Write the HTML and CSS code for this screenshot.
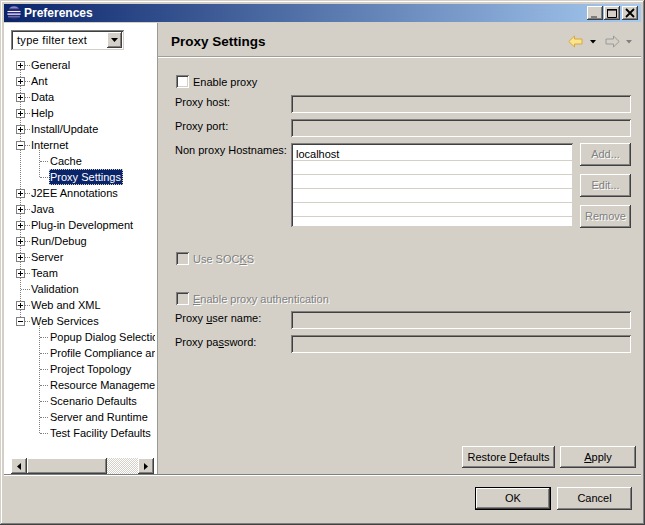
FILE: index.html
```html
<!DOCTYPE html>
<html lang="en">
<head>
<meta charset="utf-8">
<title>Preferences</title>
<link rel="stylesheet" href="styles.css">
</head>
<body>
<div class="window">
  <div class="titlebar">
    <svg class="logo" width="14" height="14" viewBox="0 0 14 14"><circle cx="7" cy="7" r="6.500" fill="#2a2a78"/><path d="M2 2.500a6.500 6.500 0 0 1 10 0z" fill="#8a88c8"/><path d="M.5 5h13v1H.5zM.4 7.500h13.200v1.200H.4z" fill="#f0f0fa"/><path d="M1 10.500h12v.7H1z" fill="#b0b0dc"/></svg>
    <span class="title-text">Preferences</span>
    <div class="caption-btns">
      <span class="cap"><svg width="16" height="14" viewBox="0 0 16 14"><rect x="4" y="10" width="6" height="2" fill="#808080"/></svg></span>
      <span class="cap"><svg width="16" height="14" viewBox="0 0 16 14"><path d="M3.500 3.500h9v8h-9z" fill="none" stroke="#000"/><path d="M3 3h10v1.600H3z" fill="#000"/></svg></span>
      <span class="cap cap-close"><svg width="16" height="14" viewBox="0 0 16 14"><path d="M4 3l8 8M12 3l-8 8" stroke="#000" stroke-width="1.800"/></svg></span>
    </div>
  </div>
  <div class="main">
    <aside class="side">
      <div class="combo">
        <span class="combo-text">type filter text</span>
        <span class="combo-btn"><svg width="7" height="4" viewBox="0 0 7 4"><path d="M0 0h7L3.500 4z" fill="#000"/></svg></span>
      </div>
      <div class="tree">
        <div class="row"><span class="tg plus"></span><span class="dash"></span><span class="lb">General</span></div>
        <div class="row"><span class="tg plus"></span><span class="dash"></span><span class="lb">Ant</span></div>
        <div class="row"><span class="tg plus"></span><span class="dash"></span><span class="lb">Data</span></div>
        <div class="row"><span class="tg plus"></span><span class="dash"></span><span class="lb">Help</span></div>
        <div class="row"><span class="tg plus"></span><span class="dash"></span><span class="lb">Install/Update</span></div>
        <div class="row"><span class="tg"></span><span class="dash"></span><span class="lb">Internet</span></div>
        <div class="kids">
          <div class="row kid"><span class="dash"></span><span class="lb">Cache</span></div>
          <div class="row kid"><span class="dash"></span><span class="lb sel">Proxy Settings</span></div>
        </div>
        <div class="row"><span class="tg plus"></span><span class="dash"></span><span class="lb">J2EE Annotations</span></div>
        <div class="row"><span class="tg plus"></span><span class="dash"></span><span class="lb">Java</span></div>
        <div class="row"><span class="tg plus"></span><span class="dash"></span><span class="lb">Plug-in Development</span></div>
        <div class="row"><span class="tg plus"></span><span class="dash"></span><span class="lb">Run/Debug</span></div>
        <div class="row"><span class="tg plus"></span><span class="dash"></span><span class="lb">Server</span></div>
        <div class="row"><span class="tg plus"></span><span class="dash"></span><span class="lb">Team</span></div>
        <div class="row leaf"><span class="dash"></span><span class="lb">Validation</span></div>
        <div class="row"><span class="tg plus"></span><span class="dash"></span><span class="lb">Web and XML</span></div>
        <div class="row"><span class="tg"></span><span class="dash"></span><span class="lb">Web Services</span></div>
        <div class="kids">
          <div class="row kid"><span class="dash"></span><span class="lb">Popup Dialog Selection</span></div>
          <div class="row kid"><span class="dash"></span><span class="lb">Profile Compliance and WS-I</span></div>
          <div class="row kid"><span class="dash"></span><span class="lb">Project Topology</span></div>
          <div class="row kid"><span class="dash"></span><span class="lb">Resource Management</span></div>
          <div class="row kid"><span class="dash"></span><span class="lb">Scenario Defaults</span></div>
          <div class="row kid"><span class="dash"></span><span class="lb">Server and Runtime</span></div>
          <div class="row kid"><span class="dash"></span><span class="lb">Test Facility Defaults</span></div>
        </div>
      </div>
      <div class="hscroll">
        <span class="sb-btn"><svg width="4" height="7" viewBox="0 0 4 7"><path d="M4 0v7L0 3.500z" fill="#000"/></svg></span>
        <span class="sb-thumb"></span>
        <span class="sb-track"></span>
        <span class="sb-btn"><svg width="4" height="7" viewBox="0 0 4 7"><path d="M0 0v7l4-3.500z" fill="#000"/></svg></span>
      </div>
    </aside>
    <section class="content">
      <header class="head">
        <h1 class="head-title">Proxy Settings</h1>
        <div class="nav">
          <svg class="nav-back" width="15" height="13" viewBox="0 0 15 13"><path d="M.8 6.500L6.500 1v3H14v5H6.500v3z" fill="#fbe58c" stroke="#d8a83c"/></svg>
          <svg class="nav-drop" width="6" height="4" viewBox="0 0 6 4"><path d="M0 0h6L3 3.500z" fill="#000"/></svg>
          <svg class="nav-fwd" width="15" height="13" viewBox="0 0 15 13"><path d="M14.200 6.500L8.500 1v3H1v5h7.500v3z" fill="#d4d0c8" stroke="#9a9a96"/></svg>
          <svg class="nav-drop2" width="6" height="4" viewBox="0 0 6 4"><path d="M0 0h6L3 3.500z" fill="#808080"/></svg>
        </div>
      </header>
      <div class="form">
        <label class="check first"><span class="box"></span><span>Enable proxy</span></label>
        <div class="field-row gap6"><span class="lab">Proxy host:</span><span class="field"></span></div>
        <div class="field-row gap6"><span class="lab">Proxy port:</span><span class="field"></span></div>
        <div class="field-row gap6">
          <span class="lab">Non proxy Hostnames:</span>
          <div class="list">
            <div class="list-row">localhost</div>
            <div class="list-row"></div>
            <div class="list-row"></div>
            <div class="list-row"></div>
            <div class="list-row"></div>
            <div class="list-row"></div>
          </div>
          <div class="list-btns">
            <span class="btn small off">Add...</span>
            <span class="btn small off">Edit...</span>
            <span class="btn small off">Remove</span>
          </div>
        </div>
        <label class="check socks off"><span class="box dim"></span><span>Use SOC<u>K</u>S</span></label>
        <label class="check auth off"><span class="box dim"></span><span><u>E</u>nable proxy authentication</span></label>
        <div class="field-row gap5"><span class="lab">Proxy <u>u</u>ser name:</span><span class="field"></span></div>
        <div class="field-row gap6"><span class="lab">Proxy pa<u>s</u>sword:</span><span class="field"></span></div>
      </div>
      <div class="page-btns">
        <span class="btn restore"><span>Restore <u>D</u>efaults</span></span>
        <span class="btn apply"><span><u>A</u>pply</span></span>
      </div>
    </section>
  </div>
  <footer class="footer">
    <span class="btn dlg default">OK</span>
    <span class="btn dlg cancel">Cancel</span>
  </footer>
</div>
</body>
</html>
```
FILE: styles.css
```css
* { box-sizing: border-box; }
html, body { margin: 0; padding: 0; }
body { width: 645px; height: 525px; overflow: hidden; background: #d4d0c8; font-family: "Liberation Sans", Arial, sans-serif; font-size: 11px; color: #000; }
.window { width: 645px; height: 525px; padding: 4px 4px 2px 4px; background: #d4d0c8; display: flex; flex-direction: column; box-shadow: inset -1px -1px 0 #404040, inset 1px 1px 0 #d4d0c8, inset -2px -2px 0 #808080, inset 2px 2px 0 #fff; }
.titlebar { height: 18px; flex: none; display: flex; align-items: center; padding: 0 3px; background: linear-gradient(90deg, #0a246a, #a6caf0); color: #fff; }
.logo { flex: none; margin-right: 3px; }
.title-text { font-weight: bold; font-size: 12px; }
.caption-btns { margin-left: auto; display: flex; gap: 1px; }
.cap { width: 16px; height: 14px; display: block; background: #d4d0c8; box-shadow: inset -1px -1px 0 #404040, inset 1px 1px 0 #fff, inset -2px -2px 0 #808080; }
.cap svg { display: block; }
.cap-close { margin-left: 1px; }

.main { height: 451px; flex: none; margin-top: 1px; display: flex; }
.side { width: 154px; flex: none; background: #fff; border-right: 1px solid #9c9a94; display: flex; flex-direction: column; padding: 7px 3px 0 7px; overflow: hidden; }
.combo { width: 113px; height: 20px; flex: none; display: flex; align-items: center; justify-content: space-between; padding: 0 2px 0 6px; box-shadow: inset 1px 1px 0 #808080, inset -1px -1px 0 #d4d0c8, inset 2px 2px 0 #404040; background: #fff; }
.combo-text { white-space: nowrap; letter-spacing: .3px; }
.combo-btn { width: 15px; height: 16px; display: flex; align-items: center; justify-content: center; background: #d4d0c8; box-shadow: inset -1px -1px 0 #404040, inset 1px 1px 0 #fff, inset -2px -2px 0 #808080; }

.tree { flex: none; height: 401px; margin: 7px -1px 0 -7px; position: relative; overflow: hidden; }
.tree::before { content: ""; position: absolute; left: 16px; top: 8px; height: 256px; border-left: 1px dotted #808080; }
.row { height: 16px; display: flex; align-items: center; white-space: nowrap; padding-left: 12px; position: relative; }
.tg { flex: none; width: 9px; height: 9px; border: 1px solid #808080; background: #fff; position: relative; z-index: 1; }
.tg::before { content: ""; position: absolute; left: 1px; top: 3px; width: 5px; height: 1px; background: #000; }
.plus::after { content: ""; position: absolute; left: 3px; top: 1px; width: 1px; height: 5px; background: #000; }
.dash { flex: none; width: 5px; border-top: 1px dotted #808080; }
.lb { padding: 0 1px; line-height: 16px; }
.leaf { padding-left: 17px; }
.leaf .dash { width: 9px; }
.kids { position: relative; }
.kids::before { content: ""; position: absolute; left: 35px; top: -8px; bottom: 8px; border-left: 1px dotted #808080; }
.kid { padding-left: 36px; }
.kid .dash { width: 8px; margin-right: 1px; }
.sel { background: #0a246a; color: #fff; outline: 1px dotted #d4d0c8; outline-offset: -1px; padding: 0 2px 0 1px; }

.hscroll { height: 16px; flex: none; width: 143px; display: flex; }
.sb-btn { width: 16px; flex: none; display: flex; align-items: center; justify-content: center; background: #d4d0c8; box-shadow: inset -1px -1px 0 #404040, inset 1px 1px 0 #fff, inset -2px -2px 0 #808080; }
.sb-thumb { width: 80px; flex: none; background: #d4d0c8; box-shadow: inset -1px -1px 0 #404040, inset 1px 1px 0 #fff, inset -2px -2px 0 #808080; }
.sb-track { flex: 1; background: repeating-conic-gradient(#fff 0 25%, #d4d0c8 0 50%) 0 0 / 2px 2px; }

.content { flex: 1; min-width: 0; display: flex; flex-direction: column; }
.head { height: 35px; flex: none; display: flex; align-items: center; padding-left: 13px; box-shadow: inset 0 -1px 0 #fff, inset 0 -2px 0 #a09e98; }
.head-title { margin: 0; font-size: 13.500px; font-weight: bold; padding-top: 2px; }
.nav { margin-left: auto; display: flex; align-items: center; padding-top: 2px; margin-right: 9px; }
.nav-back { margin-right: 7px; }
.nav-drop { margin-right: 9px; }
.nav-fwd { margin-right: 6px; }

.form { flex: none; padding: 15px 10px 0 17px; }
.check { display: flex; align-items: center; height: 16px; }
.check > span:last-child { position: relative; top: 1px; }
.box { width: 13px; height: 13px; margin: 0 4px 0 1px; flex: none; background: #fff; box-shadow: inset 1px 1px 0 #808080, inset -1px -1px 0 #fff, inset 2px 2px 0 #404040, inset -2px -2px 0 #d4d0c8; }
.box.dim { background: #d4d0c8; }
.off { color: #808080; text-shadow: 1px 1px 0 #fff; }
.socks { margin-top: 22px; }
.auth { margin-top: 24px; }
.field-row { display: flex; align-items: flex-start; }
.gap6 { margin-top: 6px; }
.gap5 { margin-top: 5px; }
.lab { width: 116px; flex: none; line-height: 15px; white-space: nowrap; }
.field { flex: 1; height: 18px; background: #d4d0c8; box-shadow: inset 1px 1px 0 #808080, inset -1px -1px 0 #fff, inset 2px 2px 0 #404040; }
.list { width: 282px; height: 84px; flex: none; background: #fff; padding: 3px 1px 1px 2px; box-shadow: inset 1px 1px 0 #808080, inset -1px -1px 0 #d4d0c8, inset 2px 2px 0 #404040; overflow: hidden; }
.list-row { height: 14px; padding-left: 3px; line-height: 14px; border-bottom: 1px solid #d4d0c8; }
.list-row:first-child { height: 15px; padding-top: 1px; }
.list-btns { margin-left: 7px; flex: 1; display: flex; flex-direction: column; gap: 8px; }
.btn { display: flex; align-items: center; justify-content: center; background: #d4d0c8; box-shadow: inset -1px -1px 0 #404040, inset 1px 1px 0 #fff, inset -2px -2px 0 #808080; white-space: nowrap; padding-bottom: 1px; }
.small { height: 23px; }
.page-btns { margin-top: auto; display: flex; justify-content: flex-end; gap: 5px; padding: 0 5px 6px 0; }
.restore { width: 93px; height: 22px; }
.apply { width: 76px; height: 22px; }
.footer { flex: 1; display: flex; justify-content: flex-end; gap: 6px; padding: 13px 9px 0 0; box-shadow: inset 0 1px 0 #808080, inset 0 2px 0 #fff; }
.dlg { height: 23px; }
.default { width: 76px; outline: 1px solid #000; outline-offset: -1px; box-shadow: inset -2px -2px 0 #404040, inset 2px 2px 0 #fff, inset -3px -3px 0 #808080; }
.cancel { width: 75px; }
```
